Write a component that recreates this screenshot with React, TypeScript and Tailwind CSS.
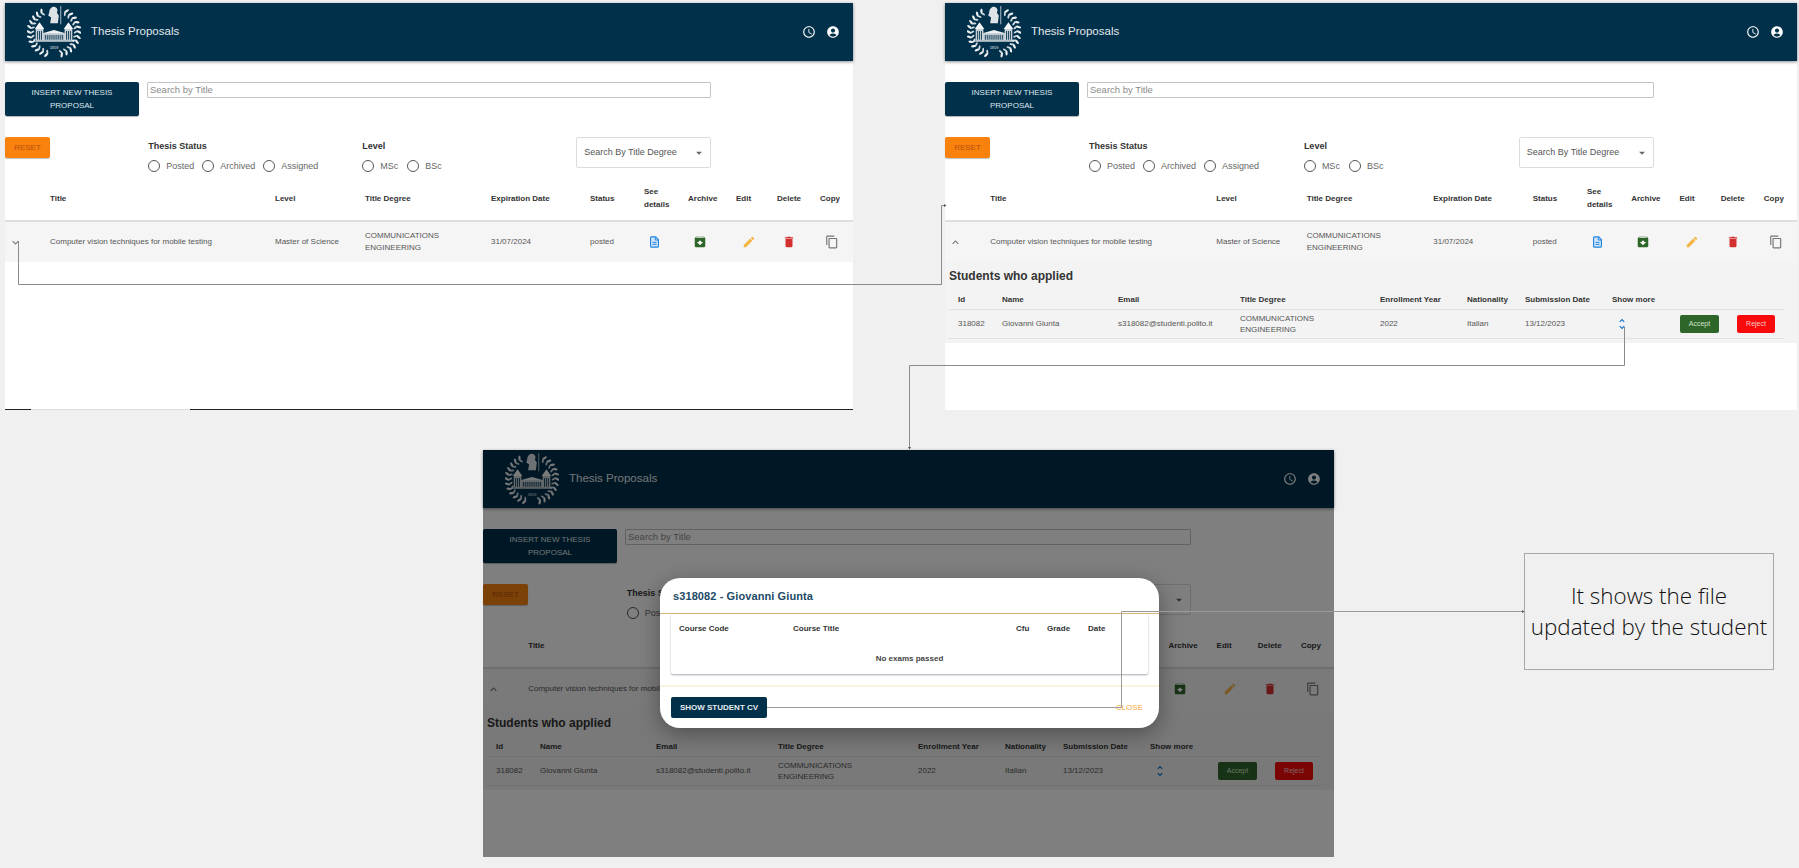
import React from "react";
import {
  MdAccessTime,
  MdAccountCircle,
  MdArchive,
  MdArrowDropDown,
  MdContentCopy,
  MdDelete,
  MdEdit,
  MdExpandLess,
  MdExpandMore,
  MdUnfoldMore,
} from "react-icons/md";

const FONT = "font-['Liberation_Sans','Roboto',sans-serif]";
const MAIN_COLS =
  "grid grid-cols-[45fr_225fr_90fr_126fr_99fr_54fr_44fr_48fr_41fr_43fr_33fr] items-center";
const SUB_COLS =
  "grid grid-cols-[44px_116px_122px_140px_87px_58px_87px_68px_57px_47px] items-center pl-[9px]";

const Logo = () => {
  const leaves: number[] = [];
  for (let a = 30; a <= 330; a += 12) {
    if (a < 168 || a > 192) leaves.push(a);
  }
  return (
    <svg width="54" height="54" viewBox="0 0 56 56" className="shrink-0">
      {leaves.map((a) => {
        const r = (a * Math.PI) / 180;
        const x = 28 + 26 * Math.sin(r);
        const y = 28 - 25 * Math.cos(r);
        const ix = 28 + 22.5 * Math.sin(r);
        const iy = 28 - 21.5 * Math.cos(r);
        return (
          <g key={a}>
            <ellipse cx={x} cy={y} rx="1.2" ry="2.8" fill="#eef1f3" transform={`rotate(${a + 28} ${x} ${y})`} />
            <ellipse cx={ix} cy={iy} rx="1" ry="2.2" fill="#d5dce1" transform={`rotate(${a - 28} ${ix} ${iy})`} />
          </g>
        );
      })}
      {/* statue */}
      <path d="M23 8c0-4 3-7 6-6 3 1 3 4 2 6l2 3-1 8h-8l1-6-3-2z" fill="#dde3e7" />
      <path d="M35 1v19" stroke="#dde3e7" strokeWidth="0.8" />
      {/* building */}
      <path d="M8 25l5-7 5 7zM38 25l5-7 5 7z" fill="#f2f4f5" />
      <path d="M9 25h8v4h22v-4h8v12H9z" fill="#c9d2d8" />
      <path d="M17 29l11-3 11 3z" fill="#eef1f3" />
      <path
        d="M11 27v9M13 27v9M15 27v9M19 31v5M21 31v5M23 31v5M25 31v5M27 31v5M29 31v5M31 31v5M33 31v5M35 31v5M37 31v5M41 27v9M43 27v9M45 27v9"
        stroke="#01304b"
        strokeWidth="0.9"
      />
      <path d="M7 37.500h42" stroke="#f2f4f5" strokeWidth="1" />
      <text x="28" y="46" textAnchor="middle" fontSize="4" fill="#e8ecee" fontFamily="Liberation Sans">
        1859
      </text>
    </svg>
  );
};

const DocIcon = () => (
  <svg width="11" height="12" viewBox="0 0 14 15">
    <path
      d="M3 1h5.500L12 4.500V13a1 1 0 0 1-1 1H3a1 1 0 0 1-1-1V2a1 1 0 0 1 1-1z"
      fill="#cfe5fa"
      stroke="#1f82dd"
      strokeWidth="1.4"
    />
    <path d="M8 1.500V5h3.500M4.500 8h5M4.500 10.500h5" fill="none" stroke="#1f82dd" strokeWidth="1.200" />
  </svg>
);

const Radio = ({ label }: { label: string }) => (
  <div className="flex items-center gap-[6px]">
    <span className="h-[12px] w-[12px] rounded-full border border-[#555]" />
    <span className="text-[9px] text-[#666]">{label}</span>
  </div>
);

const ApplicantTable = () => (
  <div className="h-[81px] bg-[#f3f3f3] pl-[4px]">
    <h3 className="flex h-[28px] items-center text-[12px] font-bold text-[#333]">Students who applied</h3>
    <div className="w-[835px]">
      <div className={`${SUB_COLS} h-[20px] border-b border-[#e2e2e2] text-[8px] font-bold text-[#333]`}>
        <span>Id</span>
        <span>Name</span>
        <span>Email</span>
        <span>Title Degree</span>
        <span>Enrollment Year</span>
        <span>Nationality</span>
        <span>Submission Date</span>
        <span>Show more</span>
        <span />
        <span />
      </div>
      <div className={`${SUB_COLS} h-[29px] border-b border-[#e2e2e2] text-[8px] text-[#555]`}>
        <span>318082</span>
        <span>Giovanni Giunta</span>
        <span>s318082@studenti.polito.it</span>
        <span className="leading-[11px]">
          COMMUNICATIONS
          <br />
          ENGINEERING
        </span>
        <span>2022</span>
        <span>Italian</span>
        <span>13/12/2023</span>
        <span className="pl-[3px]">
          <MdUnfoldMore size={14} color="#1976d2" />
        </span>
        <button className="flex h-[18px] w-[39px] items-center justify-center rounded-[2px] bg-[#2e6528] text-[7px] text-[#d5e3d0]">
          Accept
        </button>
        <button className="flex h-[18px] w-[38px] items-center justify-center rounded-[2px] bg-[#f60a0a] text-[7px] text-[#ffc9c9]">
          Reject
        </button>
      </div>
    </div>
  </div>
);

const ProposalPage = ({ expanded }: { expanded: boolean }) => (
  <div className="flex h-full w-full flex-col bg-white">
    <header className="flex h-[58px] shrink-0 items-center bg-[#01304b] pl-[22px] pr-[13px] shadow-[0_1px_3px_rgba(0,0,0,0.45)]">
      <Logo />
      <span className="ml-[10px] text-[11.500px] text-[#e3e8ec]">Thesis Proposals</span>
      <div className="ml-auto flex items-center gap-[10px] text-white">
        <MdAccessTime size={14} />
        <MdAccountCircle size={14} />
      </div>
    </header>

    <div className="mt-[21px] flex h-[34px] w-[83.25%] shrink-0 gap-[8px]">
      <button className="h-[34px] w-[134px] rounded-[2px] bg-[#01304b] text-[8px] leading-[13px] text-[#dfe6ea] shadow-[0_1px_1px_rgba(0,0,0,0.3)]">
        INSERT NEW THESIS
        <br />
        PROPOSAL
      </button>
      <div className="flex h-[16px] flex-1 items-center rounded-[1px] border border-[#c4c4c4] pl-[2px] text-[9.500px] text-[#8a8a8a]">
        Search by Title
      </div>
    </div>

    <div className="mt-[21px] grid h-[31px] w-[83.25%] shrink-0 grid-cols-[20.3%_30.3%_1fr_19.1%] items-start">
      <button className="h-[21px] w-[45px] rounded-[2px] bg-[#f9820f] text-[8px] text-[#b9500a] shadow-[0_1px_1px_rgba(0,0,0,0.25)]">
        RESET
      </button>
      <div>
        <div className="mb-[6px] mt-[3px] text-[9px] font-bold text-[#333]">Thesis Status</div>
        <div className="flex gap-[8px]">
          <Radio label="Posted" />
          <Radio label="Archived" />
          <Radio label="Assigned" />
        </div>
      </div>
      <div>
        <div className="mb-[6px] mt-[3px] text-[9px] font-bold text-[#333]">Level</div>
        <div className="flex gap-[9px]">
          <Radio label="MSc" />
          <Radio label="BSc" />
        </div>
      </div>
      <div className="flex h-[31px] items-center justify-between rounded-[2px] border border-[#dcdcdc] pl-[7px] pr-[4px] text-[9px] text-[#555]">
        Search By Title Degree
        <MdArrowDropDown size={14} color="#666" />
      </div>
    </div>

    <div className={`${MAIN_COLS} mt-[8px] h-[46px] shrink-0 border-b-2 border-[#dedede] text-[8px] font-bold leading-[13px] text-[#333]`}>
      <span />
      <span>Title</span>
      <span>Level</span>
      <span>Title Degree</span>
      <span>Expiration Date</span>
      <span>Status</span>
      <span>
        See
        <br />
        details
      </span>
      <span>Archive</span>
      <span>Edit</span>
      <span>Delete</span>
      <span>Copy</span>
    </div>
    <div className={`${MAIN_COLS} h-[40px] shrink-0 bg-[#f5f5f5] text-[8px] text-[#555]`}>
      <span className="pl-[4px] text-[#777]">{expanded ? <MdExpandLess size={13} /> : <MdExpandMore size={13} />}</span>
      <span>Computer vision techniques for mobile testing</span>
      <span>Master of Science</span>
      <span className="leading-[12px]">
        COMMUNICATIONS
        <br />
        ENGINEERING
      </span>
      <span>31/07/2024</span>
      <span>posted</span>
      <span className="pl-[5px]">
        <DocIcon />
      </span>
      <span className="pl-[5px]">
        <MdArchive size={14} color="#2e6528" />
      </span>
      <span className="pl-[6px]">
        <MdEdit size={14} color="#f5b544" />
      </span>
      <span className="pl-[5px]">
        <MdDelete size={14} color="#d32f2f" />
      </span>
      <span className="pl-[5px]">
        <MdContentCopy size={14} color="#777" />
      </span>
    </div>
    {expanded && <ApplicantTable />}
  </div>
);

const StudentDialog = () => (
  <div className="absolute left-[177px] top-[128px] flex h-[150px] w-[499px] flex-col rounded-[20px] bg-white shadow-[0_6px_22px_rgba(0,0,0,0.35)]">
    <div className="flex h-[36px] shrink-0 items-center border-b border-[#d9b77f] pl-[13px] pt-[1px] text-[11px] font-bold tracking-[0.1px] text-[#1c4a66]">
      s318082 - Giovanni Giunta
    </div>
    <div className="mx-[11px] h-[60px] shrink-0 rounded-[2px] shadow-[0_1px_2px_rgba(60,60,90,0.45)]">
      <div className="grid h-[30px] grid-cols-[114px_223px_31px_41px_1fr] items-center pl-[8px] text-[8px] font-bold text-[#333]">
        <span>Course Code</span>
        <span>Course Title</span>
        <span>Cfu</span>
        <span>Grade</span>
        <span>Date</span>
      </div>
      <div className="flex h-[30px] items-center justify-center text-[8px] font-bold text-[#444]">No exams passed</div>
    </div>
    <div className="mt-[11px] h-[2px] shrink-0 bg-[#fdf4dd]" />
    <div className="flex flex-1 items-start justify-between pl-[11px] pr-[16px] pt-[10px]">
      <button className="h-[21px] w-[96px] rounded-[2px] bg-[#01304b] text-[8px] font-bold text-[#e6ecef]">
        SHOW STUDENT CV
      </button>
      <span className="pt-[5px] text-[8px] text-[#f5a83c]">CLOSE</span>
    </div>
  </div>
);

const Connectors = () => (
  <svg width="1799" height="868" className="pointer-events-none absolute left-0 top-0" fill="none">
    <g stroke="#8b8b8b" strokeWidth="1">
      <path d="M18.500 241V284.500H941.500V205.500H944" />
      <path d="M1624.500 327V365.500H909.500V447" />
      <path d="M767 707.500H1121.500V611.500H1522" stroke="#9a9a9a" />
    </g>
    <path d="M944 204l2.500 1.500-2.500 1.500zM908 447h3l-1.500 2.500zM1522 610l2.500 1.500-2.500 1.500z" fill="#555" />
  </svg>
);

export default function App() {
  return (
    <div className={`relative h-[868px] w-[1799px] overflow-hidden bg-[#f0f0f0] ${FONT}`}>
      <section className="absolute left-[5px] top-[3px] h-[407px] w-[848px]">
        <ProposalPage expanded={false} />
        <div className="absolute inset-x-0 bottom-0 flex h-px">
          <span className="w-[26px] bg-[#222]" />
          <span className="w-[159px] bg-[#ddd]" />
          <span className="flex-1 bg-[#222]" />
        </div>
      </section>
      <section className="absolute left-[945px] top-[3px] h-[407px] w-[852px]">
        <ProposalPage expanded />
      </section>
      <section className="absolute left-[483px] top-[450px] h-[407px] w-[851px]">
        <ProposalPage expanded />
        <div className="absolute inset-0 bg-black/50" />
        <StudentDialog />
      </section>
      <div className="absolute left-[1524px] top-[553px] flex h-[117px] w-[250px] justify-center border border-[#a8a8a8] pt-[26px] text-center font-['Open_Sans',sans-serif] text-[22.400px] font-light leading-[31px] text-[#111]">
        <p>
          It shows the file
          <br />
          updated by the student
        </p>
      </div>
      <Connectors />
    </div>
  );
}
